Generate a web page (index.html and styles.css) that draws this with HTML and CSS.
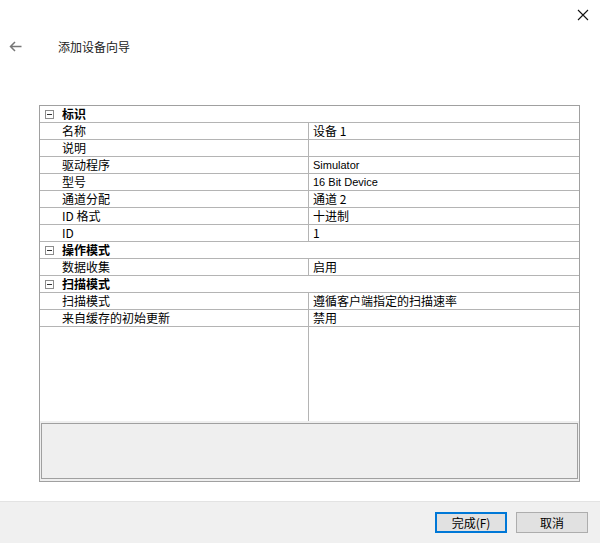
FILE: index.html
```html
<!DOCTYPE html>
<html lang="zh-CN">
<head>
    <meta charset="UTF-8">
    <title>添加设备向导</title>
    <link rel="stylesheet" href="styles.css">
</head>
<body>
    <div class="window">
        <div class="topbar">
            <svg class="close" width="12" height="12" viewBox="0 0 12 12">
                <path d="M1 1 L11 11 M11 1 L1 11" stroke="#111" stroke-width="1.1" fill="none"/>
            </svg>
        </div>

        <div class="header">
            <svg class="back" width="13" height="11" viewBox="0 0 13 11">
                <path d="M12.5 5.5 H1.5 M6 1 L1.5 5.5 L6 10" stroke="#777" stroke-width="1.5" fill="none"/>
            </svg>
            <span class="title">添加设备向导</span>
        </div>

        <div class="grid">
            <div class="rows">
                <!-- 标识 -->
                <div class="row group"><span class="toggle"></span><span class="gname">标识</span></div>
                <div class="row"><div class="name">名称</div><div class="value">设备 1</div></div>
                <div class="row"><div class="name">说明</div><div class="value"></div></div>
                <div class="row"><div class="name">驱动程序</div><div class="value latin">Simulator</div></div>
                <div class="row"><div class="name">型号</div><div class="value latin">16 Bit Device</div></div>
                <div class="row"><div class="name">通道分配</div><div class="value">通道 2</div></div>
                <div class="row"><div class="name">ID 格式</div><div class="value">十进制</div></div>
                <div class="row"><div class="name">ID</div><div class="value">1</div></div>

                <!-- 操作模式 -->
                <div class="row group"><span class="toggle"></span><span class="gname">操作模式</span></div>
                <div class="row"><div class="name">数据收集</div><div class="value">启用</div></div>

                <!-- 扫描模式 -->
                <div class="row group"><span class="toggle"></span><span class="gname">扫描模式</span></div>
                <div class="row"><div class="name">扫描模式</div><div class="value">遵循客户端指定的扫描速率</div></div>
                <div class="row"><div class="name">来自缓存的初始更新</div><div class="value">禁用</div></div>

                <div class="filler"><div class="filler-col"></div></div>
            </div>
            <div class="help">
                <div class="help-box"></div>
            </div>
        </div>

        <div class="footer">
            <button class="btn primary">完成(F)</button>
            <button class="btn">取消</button>
        </div>
    </div>
</body>
</html>
```

FILE: styles.css
```css
body {
    margin: 0;
    padding: 0;
    background-color: #fff;
    font-family: "Noto Sans CJK SC", "Liberation Sans", sans-serif;
    font-size: 12px;
    color: #000;
}
.window {
    width: 600px;
    height: 543px;
    display: flex;
    flex-direction: column;
    overflow: hidden;
}
.topbar {
    height: 30px;
    display: flex;
    justify-content: flex-end;
    align-items: flex-start;
}
.close {
    margin-top: 9px;
    margin-right: 11px;
}
.header {
    height: 32px;
    display: flex;
    align-items: center;
}
.back {
    margin-left: 9px;
}
.title {
    margin-left: 36px;
    font-size: 12px;
    color: #222;
}
.grid {
    margin: 43px 0 0 39px;
    width: 541px;
    height: 377px;
    box-sizing: border-box;
    border: 1px solid #a0a0a0;
    display: flex;
    flex-direction: column;
}
.rows {
    flex: 1;
    display: flex;
    flex-direction: column;
}
.row {
    height: 17px;
    box-sizing: border-box;
    border-bottom: 1px solid #b4b4b4;
    display: flex;
    align-items: stretch;
    line-height: 16px;
}
.name {
    width: 269px;
    box-sizing: border-box;
    padding-left: 22px;
    border-right: 1px solid #b4b4b4;
    white-space: nowrap;
}
.value {
    flex: 1;
    padding-left: 4px;
    white-space: nowrap;
}
.latin {
    font-family: "Liberation Sans", sans-serif;
    font-size: 11px;
}
.group {
    align-items: center;
}
.toggle {
    width: 9px;
    height: 9px;
    box-sizing: border-box;
    border: 1px solid #8c8c8c;
    margin-left: 5px;
    position: relative;
}
.toggle::after {
    content: "";
    position: absolute;
    left: 1px;
    top: 3px;
    width: 5px;
    height: 1px;
    background-color: #333;
}
.gname {
    margin-left: 8px;
    font-weight: bold;
}
.filler {
    flex: 1;
    display: flex;
}
.filler-col {
    width: 269px;
    box-sizing: border-box;
    border-right: 1px solid #b4b4b4;
}
.help {
    height: 60px;
    box-sizing: border-box;
    background-color: #efefef;
    padding: 2px 1px 2px 1px;
}
.help-box {
    height: 100%;
    box-sizing: border-box;
    border: 1px solid #a0a0a0;
    background-color: #efefef;
}
.footer {
    margin-top: 19px;
    flex: 1;
    background-color: #f0f0f0;
    border-top: 1px solid #e3e3e3;
    display: flex;
    justify-content: flex-end;
    align-items: flex-start;
    padding: 10px 12px 0 0;
    gap: 9px;
}
.btn {
    width: 72px;
    height: 21px;
    box-sizing: border-box;
    background-color: #e1e1e1;
    border: 1px solid #adadad;
    font-family: "Noto Sans CJK SC", sans-serif;
    font-size: 12px;
    color: #000;
    padding: 0;
}
.btn.primary {
    border: 2px solid #0078d7;
}
```
